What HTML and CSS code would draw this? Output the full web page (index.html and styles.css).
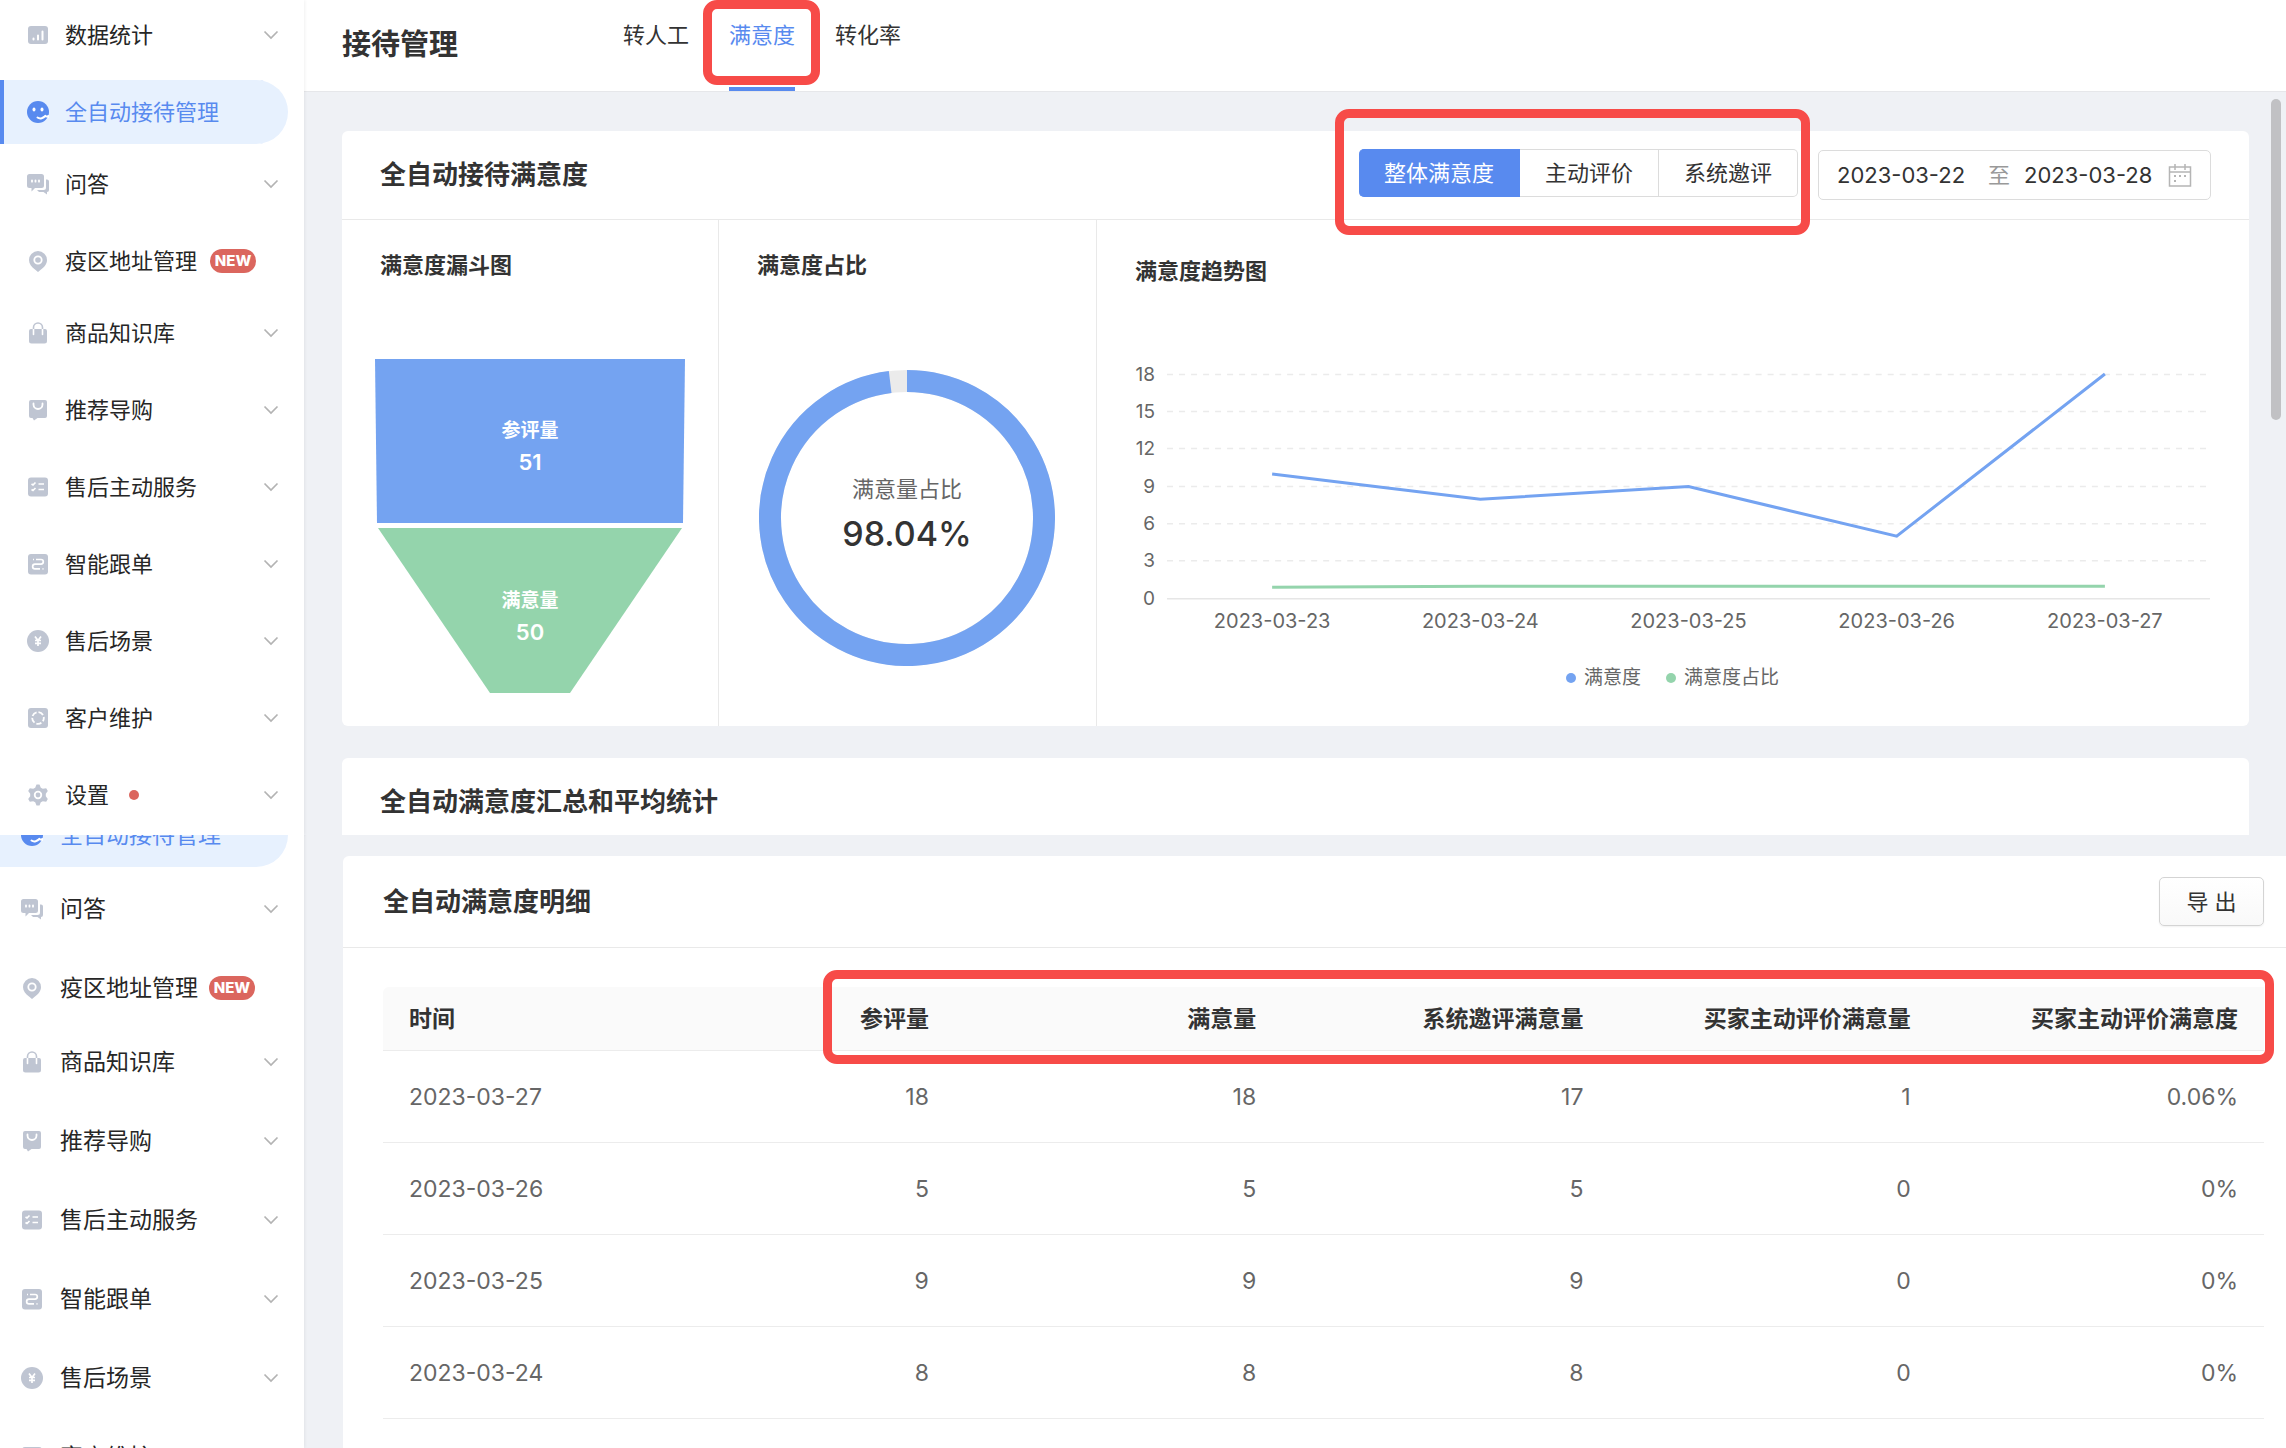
FILE: index.html
```html
<!DOCTYPE html>
<html lang="zh-CN">
<head>
<meta charset="utf-8">
<title>接待管理</title>
<meta name="viewport" content="width=device-width, initial-scale=1">
<link rel="stylesheet" href="styles.css">
</head>
<body>
<svg class="sprite" aria-hidden="true">
  <symbol id="i-stats" viewBox="0 0 22 22"><rect x="1" y="2" width="20" height="18" rx="3" fill="currentColor"/><path d="M6.500 14.500v1M11 11.500v4M15.500 7.500v8" stroke="#fff" stroke-width="2" stroke-linecap="round"/></symbol>
  <symbol id="i-face" viewBox="0 0 22 22"><circle cx="11" cy="11" r="11" fill="currentColor"/><ellipse cx="7" cy="8.500" rx="1.500" ry="2" fill="#fff"/><ellipse cx="15" cy="8.500" rx="1.500" ry="2" fill="#fff"/><path d="M10.500 16.500c2.500 1.700 6 .8 7.800-1.700" fill="none" stroke="#fff" stroke-width="2" stroke-linecap="round"/><path d="M15 15.500l7-1.500v3z" fill="#fff"/></symbol>
  <symbol id="i-chat" viewBox="0 0 22 22"><path d="M19 6.500h1a2 2 0 0 1 2 2V17a2 2 0 0 1-2 2v2.500L16.500 19H12l-2-2h6.500a2.500 2.500 0 0 0 2.500-2.500z" fill="currentColor"/><path d="M2.500 1h12A2.500 2.500 0 0 1 17 3.500v9a2.500 2.500 0 0 1-2.500 2.500H8l-3.500 3.500V15h-2A2.500 2.500 0 0 1 0 12.500v-9A2.500 2.500 0 0 1 2.500 1z" fill="currentColor"/><path d="M5 7.300v1.400M8.500 7.300v1.400M12 7.300v1.400" stroke="#fff" stroke-width="1.800" stroke-linecap="round"/></symbol>
  <symbol id="i-pin" viewBox="0 0 22 22"><path d="M11 1a9 9 0 0 1 9 9c0 4-2.500 7-6 9.500L11 22l-3-2.500C4.500 17 2 14 2 10a9 9 0 0 1 9-9z" fill="currentColor"/><circle cx="11" cy="10" r="3.700" fill="none" stroke="#fff" stroke-width="1.800"/></symbol>
  <symbol id="i-bag" viewBox="0 0 22 22"><path d="M4 7h14a2 2 0 0 1 2 2v10a2.500 2.500 0 0 1-2.500 2.500h-13A2.500 2.500 0 0 1 2 19V9a2 2 0 0 1 2-2z" fill="currentColor"/><path d="M6.500 12.500V6.500M15.500 12.500V6.500" stroke="#fff" stroke-width="1.600" stroke-linecap="round"/><path d="M6.500 7V5.500a4.500 4.500 0 0 1 9 0V7" fill="none" stroke="currentColor" stroke-width="1.600"/></symbol>
  <symbol id="i-shop" viewBox="0 0 22 22"><path d="M4 1h14a2 2 0 0 1 2 2v14a2 2 0 0 1-2 2h-7.500L7 21.500 5.500 19H4a2 2 0 0 1-2-2V3a2 2 0 0 1 2-2z" fill="currentColor"/><path d="M6.500 4.500v1a4.500 4.500 0 0 0 9 0v-1" fill="none" stroke="#fff" stroke-width="1.800" stroke-linecap="round"/></symbol>
  <symbol id="i-list" viewBox="0 0 22 22"><rect x="1" y="1.500" width="20" height="19" rx="3" fill="currentColor"/><path d="M4.500 8l1.500 1 2.500-2.500M4.500 13.500l1.500 1L8.500 12M11.500 8H17M11.500 13.500H17" fill="none" stroke="#fff" stroke-width="1.700"/></symbol>
  <symbol id="i-route" viewBox="0 0 22 22"><rect x="1" y="1" width="20" height="20.500" rx="3" fill="currentColor"/><path d="M9 6.500h5a2.300 2.300 0 0 1 0 4.600H8a2.300 2.300 0 0 0 0 4.700h5M6 6.500h1M15.500 15.800h1" fill="none" stroke="#fff" stroke-width="1.700"/></symbol>
  <symbol id="i-yen" viewBox="0 0 22 22"><circle cx="11" cy="11" r="11" fill="currentColor"/><path d="M8 6.500l3 4 3-4M8 10.500h6M8 13.300h6M11 10v6" fill="none" stroke="#fff" stroke-width="1.700"/></symbol>
  <symbol id="i-ring" viewBox="0 0 22 22"><rect x="1" y="1" width="20" height="20" rx="3" fill="currentColor"/><circle cx="11" cy="11" r="5.800" fill="none" stroke="#fff" stroke-width="1.800" stroke-dasharray="5.300 1.990" stroke-dashoffset="2"/></symbol>
  <symbol id="i-gear" viewBox="0 0 22 22"><path d="M9.500 .5h3l1.300 3.200 2 1.100 3.400-.6 1.600 2.700-2 2.800v2.600l2 2.800-1.600 2.700-3.400-.6-2 1.100-1.300 3.200h-3l-1.300-3.200-2-1.100-3.400.6-1.600-2.700 2-2.800V9.700l-2-2.800 1.600-2.700 3.400.6 2-1.100z" fill="currentColor"/><circle cx="11" cy="11" r="3.300" fill="none" stroke="#fff" stroke-width="1.800"/></symbol>
  <symbol id="i-down" viewBox="0 0 16 10"><path d="M1.500 1.500L8 8l6.500-6.500" fill="none" stroke="currentColor" stroke-width="1.700"/></symbol>
  <symbol id="i-cal" viewBox="0 0 24 24"><path d="M1.500 4h21v19h-21zM1.500 9h21M7 1v6M17 1v6" fill="none" stroke="currentColor" stroke-width="1.500"/><path d="M6 13h2M11 13h2M16 13h2M6 18h2" stroke="currentColor" stroke-width="2"/></symbol>
</svg>

<div class="pane">
  <nav class="nav" aria-label="主菜单">
    <button class="item"><svg class="icon"><use href="#i-stats"/></svg>数据统计<svg class="chev"><use href="#i-down"/></svg></button>
    <a class="item leaf active bar" href="#"><svg class="icon"><use href="#i-face"/></svg>全自动接待管理</a>
    <button class="item"><svg class="icon"><use href="#i-chat"/></svg>问答<svg class="chev"><use href="#i-down"/></svg></button>
    <a class="item leaf" href="#"><svg class="icon"><use href="#i-pin"/></svg>疫区地址管理<span class="new">NEW</span></a>
    <button class="item"><svg class="icon"><use href="#i-bag"/></svg>商品知识库<svg class="chev"><use href="#i-down"/></svg></button>
    <button class="item"><svg class="icon"><use href="#i-shop"/></svg>推荐导购<svg class="chev"><use href="#i-down"/></svg></button>
    <button class="item"><svg class="icon"><use href="#i-list"/></svg>售后主动服务<svg class="chev"><use href="#i-down"/></svg></button>
    <button class="item"><svg class="icon"><use href="#i-route"/></svg>智能跟单<svg class="chev"><use href="#i-down"/></svg></button>
    <button class="item"><svg class="icon"><use href="#i-yen"/></svg>售后场景<svg class="chev"><use href="#i-down"/></svg></button>
    <button class="item"><svg class="icon"><use href="#i-ring"/></svg>客户维护<svg class="chev"><use href="#i-down"/></svg></button>
    <button class="item leaf"><svg class="icon"><use href="#i-gear"/></svg>设置<span class="dot"></span><svg class="chev"><use href="#i-down"/></svg></button>
  </nav>

  <main class="main">
    <header class="top">
      <h1>接待管理</h1>
      <div class="tabs">
        <a href="#">转人工</a>
        <a class="on" href="#">满意度<span class="mark mark-tab"></span></a>
        <a href="#">转化率</a>
      </div>
    </header>

    <div class="content">
      <section class="card">
        <div class="card-head tools">
          <h2>全自动接待满意度</h2>
          <div class="seg">
            <button class="on">整体满意度</button><button>主动评价</button><button>系统邀评</button>
            <span class="mark mark-seg"></span>
          </div>
          <div class="range">
            <input type="text" aria-label="开始日期" value="2023-03-22">
            <span>至</span>
            <input type="text" aria-label="结束日期" value="2023-03-28">
            <svg class="cal"><use href="#i-cal"/></svg>
          </div>
        </div>
        <div class="charts">
          <div class="cell">
            <h3>满意度漏斗图</h3>
            <svg class="funnel" viewBox="0 0 310 334" role="img" aria-label="满意度漏斗图">
              <path d="M0 0h310l-2 164H2z" fill="#74a3f1"/>
              <path d="M3 169h304L195 334h-80z" fill="#94d4ac"/>
              <g class="funnel-text">
                <text x="155" y="78">参评量</text><text class="n" x="155" y="111">51</text>
                <text x="155" y="248">满意量</text><text class="n" x="155" y="281">50</text>
              </g>
            </svg>
          </div>
          <div class="cell">
            <h3>满意度占比</h3>
            <div class="donut">
              <svg viewBox="0 0 296 296" aria-hidden="true">
                <circle cx="148" cy="148" r="137" fill="none" stroke="#ebebeb" stroke-width="22"/>
                <path d="M148 11A137 137 0 1 1 131.160 12.040" fill="none" stroke="#74a3f1" stroke-width="22"/>
              </svg>
              <div class="donut-text"><span>满意量占比</span><strong>98.04%</strong></div>
            </div>
          </div>
          <div class="cell trend">
            <h3>满意度趋势图</h3>
            <svg class="line" viewBox="0 0 1074 272" role="img" aria-label="满意度趋势图">
              <g class="grid">
                <path d="M32 12.500H1074M32 49.500H1074M32 86.500H1074M32 124.500H1074M32 161.500H1074M32 198.500H1074"/>
              </g>
              <path class="axis" d="M32 236.500H1074"/>
              <g class="ylab">
                <text x="20" y="19">18</text><text x="20" y="56">15</text><text x="20" y="93">12</text><text x="20" y="131">9</text><text x="20" y="168">6</text><text x="20" y="205">3</text><text x="20" y="243">0</text>
              </g>
              <g class="xlab">
                <text x="137" y="266">2023-03-23</text><text x="345" y="266">2023-03-24</text><text x="553" y="266">2023-03-25</text><text x="761" y="266">2023-03-26</text><text x="969" y="266">2023-03-27</text>
              </g>
              <path class="s1" d="M137 112L345 137L553 124.500L761 174L969 12"/>
              <path class="s2" d="M137 225L345 224H969"/>
            </svg>
            <ul class="legend"><li>满意度</li><li>满意度占比</li></ul>
          </div>
        </div>
      </section>

      <section class="card cut">
        <h2>全自动满意度汇总和平均统计</h2>
      </section>
    </div>
    <span class="thumb"></span>
  </main>
</div>

<div class="pane rest">
  <nav class="nav second" aria-label="主菜单（滚动后）">
    <a class="item leaf active" href="#"><svg class="icon"><use href="#i-face"/></svg>全自动接待管理</a>
    <button class="item"><svg class="icon"><use href="#i-chat"/></svg>问答<svg class="chev"><use href="#i-down"/></svg></button>
    <a class="item leaf" href="#"><svg class="icon"><use href="#i-pin"/></svg>疫区地址管理<span class="new">NEW</span></a>
    <button class="item"><svg class="icon"><use href="#i-bag"/></svg>商品知识库<svg class="chev"><use href="#i-down"/></svg></button>
    <button class="item"><svg class="icon"><use href="#i-shop"/></svg>推荐导购<svg class="chev"><use href="#i-down"/></svg></button>
    <button class="item"><svg class="icon"><use href="#i-list"/></svg>售后主动服务<svg class="chev"><use href="#i-down"/></svg></button>
    <button class="item"><svg class="icon"><use href="#i-route"/></svg>智能跟单<svg class="chev"><use href="#i-down"/></svg></button>
    <button class="item"><svg class="icon"><use href="#i-yen"/></svg>售后场景<svg class="chev"><use href="#i-down"/></svg></button>
    <button class="item"><svg class="icon"><use href="#i-ring"/></svg>客户维护<svg class="chev"><use href="#i-down"/></svg></button>
  </nav>
  <main class="main">
    <section class="detail">
      <div class="card-head">
        <h2>全自动满意度明细</h2>
        <button class="export">导 出</button>
      </div>
      <div class="table-wrap">
        <table>
          <thead><tr><th>时间</th><th>参评量</th><th>满意量</th><th>系统邀评满意量</th><th>买家主动评价满意量</th><th>买家主动评价满意度</th></tr></thead>
          <tbody>
            <tr><td>2023-03-27</td><td>18</td><td>18</td><td>17</td><td>1</td><td>0.06%</td></tr>
            <tr><td>2023-03-26</td><td>5</td><td>5</td><td>5</td><td>0</td><td>0%</td></tr>
            <tr><td>2023-03-25</td><td>9</td><td>9</td><td>9</td><td>0</td><td>0%</td></tr>
            <tr><td>2023-03-24</td><td>8</td><td>8</td><td>8</td><td>0</td><td>0%</td></tr>
          </tbody>
        </table>
        <span class="mark mark-table"></span>
      </div>
    </section>
  </main>
</div>
</body>
</html>
```
FILE: styles.css
```css
* { box-sizing: border-box; }

body {
  margin: 0;
  height: 100vh;
  overflow: hidden;
  display: flex;
  flex-direction: column;
  background: #eff1f5;
  color: #333;
  font: 22px/32px Inter, "Noto Sans CJK SC", sans-serif;
}

h1, h2, h3, ul { margin: 0; padding: 0; }
h1 { font-size: 29px; font-weight: 600; }
h2 { font-size: 26px; font-weight: 600; }
h3 { font-size: 22px; font-weight: 600; }
a { color: inherit; text-decoration: none; }
button, input { font: inherit; color: inherit; }
.sprite { position: absolute; width: 0; height: 0; }

.pane { display: flex; flex: none; }
.pane.rest { flex: 1; min-height: 0; overflow: hidden; }
.main { position: relative; flex: 1; min-width: 0; display: flex; flex-direction: column; }

/* Side menu */
.nav {
  flex: none;
  width: 304px;
  padding: 3px 16px 0 0;
  background: #fff;
  box-shadow: 1px 0 3px rgba(0, 0, 0, .06);
  z-index: 1;
}
.item {
  display: flex;
  align-items: center;
  width: 100%;
  height: 64px;
  margin: 0 0 13px;
  padding: 0 9px 0 27px;
  border: 0;
  border-radius: 0 32px 32px 0;
  background: none;
  color: #262626;
  text-align: left;
  white-space: nowrap;
}
.item.leaf { margin-bottom: 8px; }
.icon { flex: none; width: 22px; height: 22px; margin-right: 16px; color: #bfc5d2; }
.chev { width: 16px; height: 10px; margin-left: auto; color: #b3b3b3; }
.active { background: #e7f1fe; color: #588aef; }
.active .icon { color: #588aef; }
.bar { box-shadow: inset 4px 0 #588aef; }
.new {
  width: 46px;
  margin-left: 13px;
  border-radius: 12px;
  background: #db665e;
  color: #fff;
  font-size: 15px;
  font-weight: 800;
  line-height: 24px;
  text-align: center;
}
.dot { width: 10px; height: 10px; margin-left: 20px; border-radius: 50%; background: #db665e; }

.second { padding-top: 0; margin-top: -32px; font-size: 23px; }
.second .item { margin-bottom: 15px; padding-left: 21px; }
.second .item.leaf { margin-bottom: 10px; }
.second .icon { margin-right: 17px; }
.second .new { margin-left: 11px; }

/* Page header */
.top {
  display: flex;
  height: 92px;
  padding-left: 38px;
  background: #fff;
  border-bottom: 1px solid #e6e7ea;
}
.top h1 { width: 281px; line-height: 90px; }
.tabs { display: flex; gap: 40px; }
.tabs a { position: relative; padding-top: 19px; }
.tabs .on { color: #588aef; box-shadow: inset 0 -4px #588aef; }

/* Red highlight frames */
.mark { position: absolute; border: 9px solid #f74b48; border-radius: 14px; pointer-events: none; }
.mark-tab { inset: 0 -25px 6px -26px; }
.mark-seg { inset: -40px -12px -38px -24px; }
.mark-table { inset: -17px -10px auto calc(30% - 124px); height: 94px; }

/* Cards */
.content { flex: 1; display: flex; flex-direction: column; gap: 32px; padding: 39px 37px 0 38px; }
.card { background: #fff; border-radius: 6px; }
.card-head {
  display: flex;
  align-items: center;
  justify-content: space-between;
  height: 89px;
  padding: 0 38px;
  border-bottom: 1px solid #e9e9e9;
}
.tools { gap: 20px; }
.tools h2 { margin-right: auto; }
.cut { flex: 1; padding: 28px 38px 16px; border-radius: 6px 6px 0 0; }

.seg { position: relative; display: flex; margin-top: -4px; }
.seg button {
  height: 48px;
  padding: 0 25px;
  border: 1px solid #dcdcdc;
  border-left-width: 0;
  background: #fff;
}
.seg button.on { background: #588aef; border-color: #588aef; color: #fff; border-radius: 5px 0 0 5px; }
.seg button:nth-child(3) { border-radius: 0 5px 5px 0; }

.range {
  display: flex;
  align-items: center;
  height: 50px;
  padding: 0 18px;
  border: 1px solid #dcdcdc;
  border-radius: 5px;
}
.range input { width: 138px; padding: 0; border: 0; outline: 0; background: none; }
.range span { margin: 0 14px 0 13px; color: #999; }
.cal { width: 24px; height: 24px; margin-left: 6px; color: #b5b5b5; }

/* Charts */
.charts { display: grid; grid-template-columns: 376px 378px 1fr; height: 506px; }
.cell { padding: 29px 39px 0 38px; }
.cell + .cell { border-left: 1px solid #e9e9e9; }
.funnel { display: block; width: 310px; margin: 78px -5px 0; }
.funnel-text { fill: #fff; font-size: 19px; font-weight: 700; text-anchor: middle; }
.funnel-text .n { font-size: 22px; font-weight: 600; }
.donut { position: relative; width: 296px; margin: 89px auto 0; }
.donut svg { display: block; }
.donut-text {
  position: absolute;
  inset: 0;
  display: flex;
  flex-direction: column;
  align-items: center;
  justify-content: center;
  padding-bottom: 12px;
}
.donut-text span { color: #666; line-height: 44px; }
.donut-text strong { font-size: 34px; font-weight: 500; line-height: 46px; }

.trend { padding-top: 35px; }
.line { display: block; width: 100%; margin-top: 75px; font-size: 19px; overflow: visible; }
.grid path { stroke: #ebebeb; stroke-width: 1.500; stroke-dasharray: 6 6; }
.axis { stroke: #e6e6e6; stroke-width: 1.500; }
.ylab, .xlab { fill: #666; }
.ylab { text-anchor: end; }
.xlab { font-size: 20px; text-anchor: middle; }
.s1, .s2 { fill: none; stroke: #74a3f1; stroke-width: 3; }
.s2 { stroke: #94d4ac; }
.legend {
  display: flex;
  justify-content: center;
  gap: 25px;
  margin-top: 28px;
  list-style: none;
  font-size: 19px;
  color: #666;
}
.legend li { display: flex; align-items: center; gap: 8px; }
.legend li::before { content: ""; width: 10px; height: 10px; border-radius: 50%; background: #74a3f1; }
.legend li + li::before { background: #94d4ac; }

.thumb { position: absolute; top: 99px; right: 5px; width: 10px; height: 321px; border-radius: 5px; background: #c1c1c4; }

/* Detail table */
.detail { flex: 1; margin: 21px 0 0 39px; background: #fff; border-radius: 6px 0 0 0; }
.detail .card-head { height: 92px; padding: 0 22px 0 40px; }
.export {
  width: 105px;
  height: 49px;
  border: 1px solid #d4d4d4;
  border-radius: 5px;
  background: linear-gradient(#fff, #f9f9f9);
  box-shadow: 0 1px 2px rgba(0, 0, 0, .06);
}
.table-wrap { position: relative; margin: 39px 22px 0 40px; }
table { width: 100%; table-layout: fixed; border-collapse: separate; border-spacing: 0; font-size: 23px; }
th, td { padding: 0 26px; border-bottom: 1px solid #ececec; text-align: right; white-space: nowrap; }
th { width: 17.4%; height: 64px; background: #fafafa; font-weight: 600; }
td { height: 92px; color: #666; }
th:first-child, td:first-child { width: auto; text-align: left; }
th:first-child { border-top-left-radius: 6px; }
```
